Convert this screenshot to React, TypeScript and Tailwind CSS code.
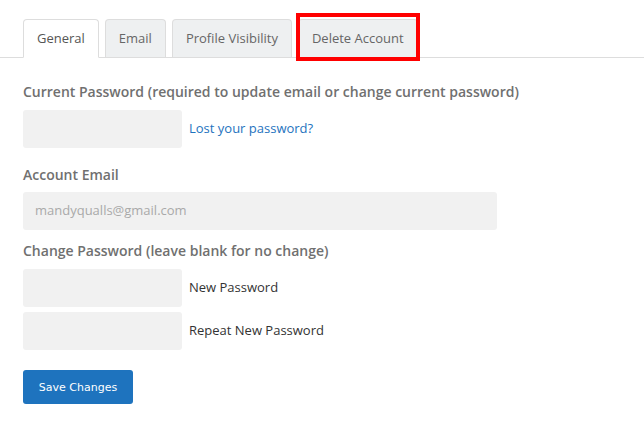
import React from "react";

export default function App() {
  return (
    <div className="w-[644px] h-[426px] bg-white font-['Open_Sans',sans-serif] text-[13px] text-[#333] overflow-hidden">
      <div className="pt-[19px] pl-[23px] flex items-end border-b border-[#dddddd] h-[58px]">
        <div className="h-[39px] -mb-px px-[13px] flex items-center bg-white border border-[#dddddd] border-b-white rounded-t-[4px] text-[#555]">
          General
        </div>
        <div className="ml-[6px] h-[38px] px-[13px] flex items-center bg-[#eef0f1] border border-[#dddddd] border-b-0 rounded-t-[4px] text-[#666]">
          Email
        </div>
        <div className="ml-[6px] h-[38px] px-[13px] flex items-center bg-[#eef0f1] border border-[#dddddd] border-b-0 rounded-t-[4px] text-[#666]">
          Profile Visibility
        </div>
        <div className="relative ml-[6px] h-[38px] px-[13px] flex items-center bg-[#eef0f1] border border-[#dddddd] border-b-0 rounded-t-[4px] text-[#666]">
          Delete Account
          <div className="absolute left-[-3px] right-[-3px] top-[-7px] bottom-[-4px] border-[4px] border-[#ff0000]" />
        </div>
      </div>

      <div className="px-[23px]">
        <div className="mt-[24px] text-[14px] font-semibold text-[#707070] leading-[20px]">
          Current Password (required to update email or change current password)
        </div>
        <div className="mt-[8px] flex items-center">
          <div className="w-[159px] h-[38px] bg-[#f1f1f1] rounded-[3px]" />
          <a className="ml-[7px] text-[#1e73be]">Lost your password?</a>
        </div>

        <div className="mt-[17px] text-[14px] font-semibold text-[#707070] leading-[20px]">
          Account Email
        </div>
        <div className="mt-[7px] w-[474px] h-[38px] bg-[#f1f1f1] rounded-[3px] flex items-center pl-[12px] text-[#a9a9a9]">
          mandyqualls@gmail.com
        </div>

        <div className="mt-[11px] text-[14px] font-semibold text-[#707070] leading-[20px]">
          Change Password (leave blank for no change)
        </div>
        <div className="mt-[8px] flex items-center">
          <div className="w-[159px] h-[38px] bg-[#f1f1f1] rounded-[3px]" />
          <span className="ml-[7px] text-[#333]">New Password</span>
        </div>
        <div className="mt-[5px] flex items-center">
          <div className="w-[159px] h-[38px] bg-[#f1f1f1] rounded-[3px]" />
          <span className="ml-[7px] text-[#333]">Repeat New Password</span>
        </div>

        <button className="mt-[20px] w-[110px] h-[34px] pt-[2px] bg-[#1e73be] rounded-[3px] text-white font-['DejaVu_Sans',sans-serif] text-[11px]">
          Save Changes
        </button>
      </div>
    </div>
  );
}
